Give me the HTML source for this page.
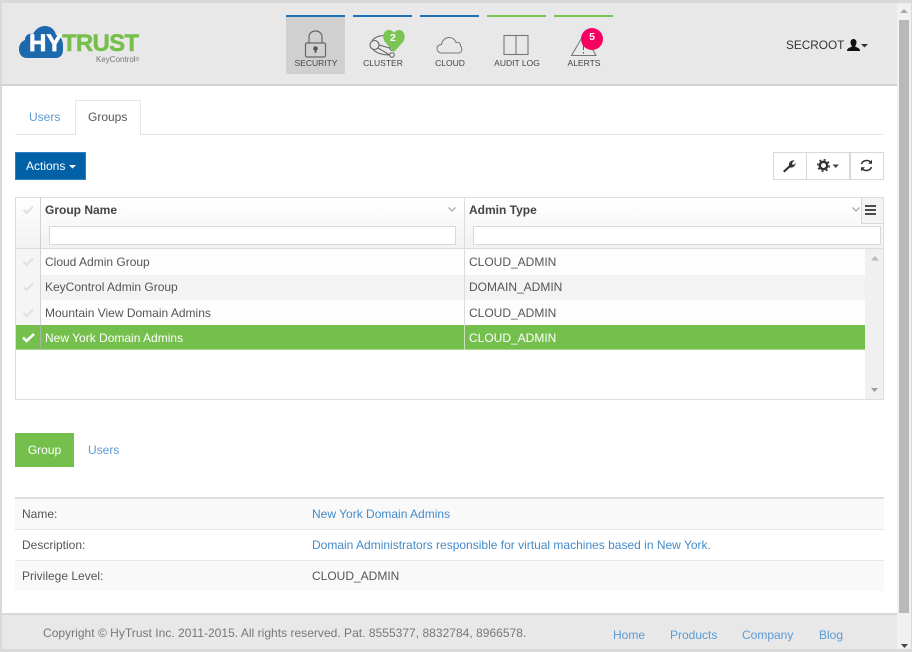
<!DOCTYPE html>
<html><head><meta charset="utf-8">
<style>
html,body{margin:0;padding:0;width:912px;height:652px;overflow:hidden;background:#fff}
body{font-family:"Liberation Sans",sans-serif;font-size:12px;color:#555;position:relative}
.a{position:absolute;white-space:nowrap}
.b{position:absolute;box-sizing:border-box}
.link{color:#428bca}
.nl{position:absolute;top:58px;font-size:8.5px;color:#444;text-align:center;width:60px;line-height:10px}
.bar{position:absolute;top:15px;height:2px;width:59px}
.cell{position:absolute;line-height:25px;white-space:nowrap}
svg{position:absolute;overflow:visible}
</style></head><body>
<!-- frame -->
<div class="b" style="left:0;top:0;width:912px;height:3px;background:#d9d9d9"></div>
<div class="b" style="left:0;top:0;width:2px;height:652px;background:#d9d9d9"></div>
<div class="b" style="left:0;top:649px;width:912px;height:3px;background:#d9d9d9"></div>
<!-- header -->
<div class="b" style="left:2px;top:3px;width:895px;height:83px;background:#e8e8e8;border-bottom:2px solid #d2d2d2"></div>
<!-- logo -->
<svg style="left:0;top:0" width="150" height="75">
<path d="M27 58 C21 58 19 53 19 49 C19 44 22 41 25 40 C25 35 29 33 33 34 C36 28 41 26 45 26 C51 26 55 30 56 35 C60 35 63 40 63 45 L63 50 C63 55 60 58 56 58 Z" fill="#1d69ae"/>
</svg>
<div class="a" style="left:29px;top:32px;font-size:24px;font-weight:bold;color:#fff;line-height:24px;-webkit-text-stroke:.7px #fff">HY</div>
<div class="a" style="left:62px;top:32px;font-size:24px;font-weight:bold;color:#76bf4b;letter-spacing:-.75px;line-height:24px;-webkit-text-stroke:.5px #76bf4b">TRUST</div>
<div class="a" style="left:96px;top:55px;font-size:8px;color:#777;line-height:10px">KeyControl<span style="font-size:5px;vertical-align:top">®</span></div>
<!-- nav -->
<div class="bar" style="left:286px;background:#1d71b8"></div>
<div class="bar" style="left:353px;background:#1d71b8"></div>
<div class="bar" style="left:420px;background:#1d71b8"></div>
<div class="bar" style="left:487px;background:#7ac553"></div>
<div class="bar" style="left:554px;background:#7ac553"></div>
<div class="b" style="left:286px;top:17px;width:59px;height:57px;background:#d0d0d0;border-radius:0 0 2px 2px"></div>
<!-- lock -->
<svg style="left:300px;top:25px" width="32" height="36" fill="none" stroke="#666" stroke-width="1.2">
<rect x="5.500" y="18" width="20" height="14" rx="1.5"/>
<path d="M9 18 V12 C9 4 22 4 22 12 V18"/>
<circle cx="15.500" cy="23.500" r="2.300" fill="#555" stroke="none"/><path d="M15.500 24 V28" stroke="#555" stroke-width="1.6"/>
</svg>
<!-- cluster -->
<svg style="left:368px;top:28px" width="40" height="32" fill="none" stroke="#666" stroke-width="1.1">
<circle cx="6.500" cy="17" r="4.500"/><circle cx="24" cy="20" r="2.300"/><circle cx="24" cy="27" r="2.300"/>
<path d="M4 12.500 C8 8 14 7 19 8 M5 21.500 C9 25.500 15 27 21.500 27 M11 17 L21.500 20 M10 20 L21.700 27"/>
</svg>
<svg style="left:383px;top:30px" width="22" height="22"><path d="M11 22 L2 12 C-1 8 0 1 5 0 C8 -.3 10 1 11 3 C12 1 14 -.3 17 0 C22 1 23 8 20 12 Z" fill="#7ac553"/></svg>
<div class="a" style="left:390px;top:32px;font-size:10.500px;font-weight:bold;color:#fff;line-height:12px">2</div>
<!-- cloud -->
<svg style="left:436px;top:37px" width="28" height="18" fill="none" stroke="#777" stroke-width="1">
<path d="M6 16 C2 16 1 13 1 11.500 C1 9 3 7.500 5.500 7.500 C6.500 2.500 10 .5 13 .5 C17 .5 19 3 20 5.500 C22 4.500 25 6.500 24.500 9 C26 10 26 13 25.500 14 C25 15.500 24 16 22 16 Z"/>
</svg>
<!-- audit -->
<svg style="left:503px;top:34px" width="26" height="24" fill="none" stroke="#777" stroke-width="1.1">
<rect x="1" y="1.500" width="24" height="19"/><path d="M13 1.500 V20.500"/>
</svg>
<!-- alerts -->
<svg style="left:570px;top:32px" width="28" height="26" fill="none" stroke="#777" stroke-width="1">
<path d="M14 2 L26 23.500 H1.500 Z"/><path d="M13.500 11 V18 M13.500 20 V21.500" stroke="#555"/>
</svg>
<div class="b" style="left:581px;top:28px;width:22px;height:22px;border-radius:50%;background:#f8005f;color:#fff;font-size:10.500px;font-weight:bold;text-align:center;line-height:19px">5</div>
<div class="nl" style="left:286px">SECURITY</div>
<div class="nl" style="left:353px">CLUSTER</div>
<div class="nl" style="left:420px">CLOUD</div>
<div class="nl" style="left:487px">AUDIT LOG</div>
<div class="nl" style="left:554px">ALERTS</div>
<!-- user -->
<div class="a" style="left:786px;top:38px;font-size:11.800px;color:#333;line-height:14px">SECROOT</div>
<svg style="left:847px;top:39px" width="22" height="13">
<path d="M0 12 C0 9 3 8.500 5 7.500 C4 6 3.500 4.500 3.500 3.500 C3.500 1 5 0 6.500 0 C8 0 9.500 1 9.500 3.500 C9.500 4.500 9 6 8 7.500 C10 8.500 13 9 13 12 Z" fill="#111"/>
<path d="M14 5 H21 L17.500 8.500 Z" fill="#333"/>
</svg>
<!-- scrollbar -->
<div class="b" style="left:897px;top:3px;width:14px;height:646px;background:#f1f1f1"></div>
<div class="b" style="left:899px;top:20px;width:10px;height:593px;background:#b9b9b9"></div>
<svg style="left:900px;top:9px" width="8" height="5"><path d="M4 0 L8 4 H0 Z" fill="#a8a8a8"/></svg>
<svg style="left:901px;top:644px" width="7" height="4"><path d="M0 0 H7 L3.500 4 Z" fill="#444"/></svg>
<div class="b" style="left:911px;top:0;width:1px;height:652px;background:#d9d9d9"></div>
<!-- tabs -->
<div class="b" style="left:15px;top:134px;width:868px;height:1px;background:#e6e6e6"></div>
<div class="a" style="left:29px;top:110px;line-height:14px;color:#5b9bd5">Users</div>
<div class="b" style="left:75px;top:100px;width:66px;height:35px;background:#fff;border:1px solid #e6e6e6;border-bottom:none"></div>
<div class="a" style="left:88px;top:110px;line-height:14px;color:#555">Groups</div>
<!-- actions -->
<div class="b" style="left:15px;top:152px;width:71px;height:28px;background:#0061a6;border:1px solid #2a7fc0;color:#fff;line-height:27px;padding-left:10px">Actions</div>
<svg style="left:69px;top:165px" width="8" height="4"><path d="M0 0 H7 L3.500 3.500 Z" fill="#fff"/></svg>
<!-- tool buttons -->
<div class="b" style="left:773px;top:152px;width:34px;height:28px;background:#fff;border:1px solid #d9d9d9"></div>
<div class="b" style="left:806px;top:152px;width:44px;height:28px;background:#fff;border:1px solid #d9d9d9"></div>
<div class="b" style="left:850px;top:152px;width:34px;height:28px;background:#fff;border:1px solid #d9d9d9"></div>
<svg style="left:782px;top:159px" width="14" height="14"><path d="M1 12 L7 6.500 C6.500 3.500 9 1 12.500 1.500 L10 4 L10.500 5.500 L12 6 L13.500 3.500 C14 7 11 9 8 8.500 L2.500 13.500 Z" fill="#333"/></svg>
<svg style="left:817px;top:159px" width="24" height="14"><circle cx="6.500" cy="6.500" r="3.700" fill="none" stroke="#333" stroke-width="2.400"/><circle cx="6.500" cy="6.500" r="5.700" fill="none" stroke="#333" stroke-width="1.600" stroke-dasharray="2 2.470"/><path d="M15.500 5.500 H22 L18.700 9 Z" fill="#444"/></svg>
<svg style="left:860px;top:159px" width="13" height="13" fill="none" stroke="#333" stroke-width="1.500"><path d="M1.500 5 C2.500 1.500 8 0 11 3.500"/><path d="M11.500 8 C10.500 11.500 5 13 2 9.500"/><path d="M12 .8 V4.800 H8" fill="#333" stroke="none"/><path d="M1 12.200 V8.200 H5" fill="#333" stroke="none"/></svg>
<!-- grid -->
<div class="b" style="left:15px;top:197px;width:869px;height:203px;border:1px solid #dedede;background:#fff"></div>
<div class="b" style="left:16px;top:198px;width:867px;height:50px;background:linear-gradient(#fff,#f2f2f2)"></div>
<div class="b" style="left:16px;top:248px;width:867px;height:1px;background:#dcdcdc"></div>
<!-- rows -->
<div class="b" style="left:16px;top:249px;width:849px;height:26px;background:#fdfdfd"></div>
<div class="b" style="left:16px;top:275px;width:849px;height:25px;background:#f3f3f3"></div>
<div class="b" style="left:16px;top:300px;width:849px;height:25px;background:#fdfdfd"></div>
<div class="b" style="left:16px;top:249px;width:24px;height:76px;background:#f5f5f5"></div>
<div class="b" style="left:16px;top:325px;width:849px;height:25px;background:#75bf4d;border-bottom:1px solid #a5d88a"></div>
<div class="b" style="left:40px;top:198px;width:1px;height:127px;background:#d2d2d2"></div>
<div class="b" style="left:464px;top:198px;width:1px;height:127px;background:#dcdcdc"></div>
<div class="b" style="left:40px;top:325px;width:1px;height:25px;background:#a3b89a"></div>
<div class="b" style="left:464px;top:325px;width:1px;height:25px;background:#c8e4b8"></div>
<div class="b" style="left:865px;top:249px;width:18px;height:150px;background:#f0f0f0"></div>
<svg style="left:871px;top:256px" width="8" height="5"><path d="M4 0 L8 4.500 H0 Z" fill="#bbb"/></svg>
<svg style="left:871px;top:388px" width="8" height="5"><path d="M0 0 H7 L3.500 4 Z" fill="#999"/></svg>
<div class="b" style="left:861px;top:198px;width:22px;height:26px;background:#f3f3f3;border:1px solid #d9d9d9;border-top:none;border-right:none"></div>
<svg style="left:865px;top:205px" width="12" height="10"><path d="M0 1 H11 M0 5 H11 M0 9 H11" stroke="#333" stroke-width="1.700"/></svg>
<!-- check marks -->
<svg style="left:23px;top:205px" width="11" height="10"><path d="M.5 5 L3.500 8 L10 1.500" fill="none" stroke="#e0e0e0" stroke-width="2"/></svg>
<svg style="left:23px;top:257px" width="11" height="10"><path d="M.5 5 L3.500 8 L10 1.500" fill="none" stroke="#e0e0e0" stroke-width="2"/></svg>
<svg style="left:23px;top:282px" width="11" height="10"><path d="M.5 5 L3.500 8 L10 1.500" fill="none" stroke="#e0e0e0" stroke-width="2"/></svg>
<svg style="left:23px;top:308px" width="11" height="10"><path d="M.5 5 L3.500 8 L10 1.500" fill="none" stroke="#e0e0e0" stroke-width="2"/></svg>
<svg style="left:22px;top:332px" width="13" height="11"><path d="M1 5.500 L4.500 9 L12 2" fill="none" stroke="#fff" stroke-width="2.600"/></svg>
<!-- header text -->
<div class="a" style="left:45px;top:203px;font-weight:bold;line-height:14px;color:#444">Group Name</div>
<div class="a" style="left:469px;top:203px;font-weight:bold;line-height:14px;color:#444">Admin Type</div>
<svg style="left:448px;top:207px" width="8" height="5"><path d="M.5 .5 L4 4 L7.500 .5" fill="none" stroke="#999" stroke-width="1"/></svg>
<svg style="left:852px;top:207px" width="8" height="5"><path d="M.5 .5 L4 4 L7.500 .5" fill="none" stroke="#999" stroke-width="1"/></svg>
<div class="b" style="left:49px;top:226px;width:407px;height:19px;background:#fff;border:1px solid #d9d9d9"></div>
<div class="b" style="left:473px;top:226px;width:408px;height:19px;background:#fff;border:1px solid #d9d9d9"></div>
<!-- row text -->
<div class="cell" style="left:45px;top:250px">Cloud Admin Group</div>
<div class="cell" style="left:469px;top:250px">CLOUD_ADMIN</div>
<div class="cell" style="left:45px;top:275px">KeyControl Admin Group</div>
<div class="cell" style="left:469px;top:275px">DOMAIN_ADMIN</div>
<div class="cell" style="left:45px;top:301px">Mountain View Domain Admins</div>
<div class="cell" style="left:469px;top:301px">CLOUD_ADMIN</div>
<div class="cell" style="left:45px;top:326px;color:#fff">New York Domain Admins</div>
<div class="cell" style="left:469px;top:326px;color:#fff">CLOUD_ADMIN</div>
<!-- sub tabs -->
<div class="b" style="left:15px;top:433px;width:59px;height:34px;background:#75bf4d;color:#fff;text-align:center;line-height:35px">Group</div>
<div class="a" style="left:88px;top:443px;line-height:14px;color:#5b9bd5">Users</div>
<!-- details -->
<div class="b" style="left:15px;top:497px;width:869px;height:2px;background:#dedede"></div>
<div class="b" style="left:15px;top:499px;width:869px;height:30px;background:#f9f9f9"></div>
<div class="b" style="left:15px;top:529px;width:869px;height:1px;background:#e6e6e6"></div>
<div class="b" style="left:15px;top:560px;width:869px;height:1px;background:#e6e6e6"></div>
<div class="b" style="left:15px;top:561px;width:869px;height:30px;background:#f9f9f9"></div>
<div class="cell" style="left:22px;top:502px">Name:</div>
<div class="cell" style="left:312px;top:502px;color:#428bca">New York Domain Admins</div>
<div class="cell" style="left:22px;top:533px">Description:</div>
<div class="cell" style="left:312px;top:533px;color:#428bca">Domain Administrators responsible for virtual machines based in New York.</div>
<div class="cell" style="left:22px;top:564px">Privilege Level:</div>
<div class="cell" style="left:312px;top:564px">CLOUD_ADMIN</div>
<!-- footer -->
<div class="b" style="left:2px;top:613px;width:895px;height:36px;background:#e8e8e8;border-top:2px solid #d8d8d8"></div>
<div class="a" style="left:43px;top:626px;line-height:14px;color:#777;letter-spacing:.025px">Copyright © HyTrust Inc. 2011-2015. All rights reserved. Pat. 8555377, 8832784, 8966578.</div>
<div class="a" style="left:613px;top:628px;line-height:14px;color:#5b9bd5">Home</div>
<div class="a" style="left:670px;top:628px;line-height:14px;color:#5b9bd5">Products</div>
<div class="a" style="left:742px;top:628px;line-height:14px;color:#5b9bd5">Company</div>
<div class="a" style="left:819px;top:628px;line-height:14px;color:#5b9bd5">Blog</div>
</body></html>
